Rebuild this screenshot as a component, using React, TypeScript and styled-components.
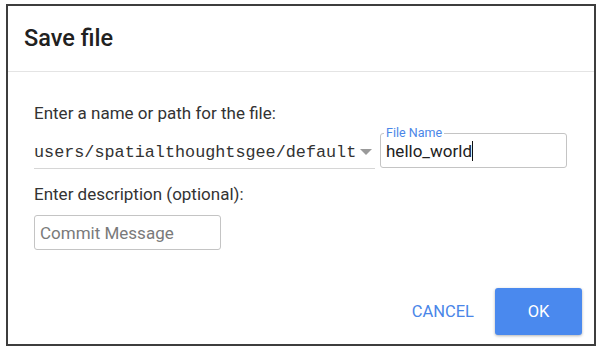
import React from "react";
import styled, { createGlobalStyle } from "styled-components";

const Global = createGlobalStyle`
  html, body { margin: 0; padding: 0; background: #ffffff; }
  body { font-family: Roboto, "Noto Sans", Arial, sans-serif; }
  * { box-sizing: border-box; }
`;

const Dialog = styled.div`
  width: 590px;
  height: 342px;
  margin: 4px 0 0 6px;
  border: 2px solid #3d3d3d;
  background: #fff;
  display: flex;
  flex-direction: column;
`;

const Header = styled.div`
  height: 66px;
  padding-left: 16px;
  display: flex;
  align-items: center;
  border-bottom: 1px solid #e4e4e4;
`;

const Title = styled.h1`
  margin: 0 0 2px 0;
  font-size: 23.5px;
  font-weight: 500;
  color: #212121;
`;

const Body = styled.div`
  padding: 31px 26px 0 26px;
  display: flex;
  flex-direction: column;
`;

const Label = styled.div<{ $mt?: number }>`
  font-size: 17px;
  line-height: 20px;
  color: #333;
  margin-top: ${(p) => p.$mt ?? 0}px;
`;

const Row = styled.div`
  display: flex;
  align-items: flex-end;
  gap: 5px;
  margin-top: 10px;
`;

const PathSelect = styled.div`
  width: 341px;
  height: 35px;
  display: flex;
  align-items: center;
  justify-content: space-between;
  border-bottom: 1px solid #d6d6d6;
  margin-bottom: -1px;
  padding-top: 2px;
`;

const PathText = styled.span`
  font-family: "Liberation Mono", "DejaVu Sans Mono", monospace;
  font-size: 16.8px;
  color: #333;
`;

const Caret = styled.span`
  width: 0;
  height: 0;
  border-left: 6px solid transparent;
  border-right: 6px solid transparent;
  border-top: 6px solid #9a9a9a;
  margin-right: 3px;
`;

const Field = styled.div`
  position: relative;
  width: 187px;
  height: 35px;
  border: 1px solid #c4c4c4;
  border-radius: 3px;
  display: flex;
  align-items: center;
  padding-left: 5px;
`;

const Legend = styled.span`
  position: absolute;
  top: -8px;
  left: 3px;
  padding: 0 2px;
  background: #fff;
  font-size: 12.5px;
  line-height: 14px;
  color: #4a86e8;
`;

const Value = styled.span`
  font-size: 17px;
  color: #222;
`;

const Cursor = styled.span`
  display: inline-block;
  width: 1px;
  height: 20px;
  background: #111;
  vertical-align: -4px;
`;

const Placeholder = styled.span`
  font-size: 17px;
  color: #7a7a7a;
`;

const CommitField = styled(Field)`
  margin-top: 11px;
`;

const Footer = styled.div`
  margin-top: auto;
  display: flex;
  justify-content: flex-end;
  align-items: center;
  padding: 0 12px 9px 0;
  gap: 4px;
`;

const TextButton = styled.button`
  border: none;
  background: none;
  font-family: Roboto, sans-serif;
  font-size: 16.5px;
  color: #4a86e8;
  padding: 0 17px;
  height: 47px;
`;

const PrimaryButton = styled.button`
  border: none;
  width: 87px;
  height: 47px;
  border-radius: 3px;
  background: #4a89ee;
  color: #fff;
  font-family: Roboto, sans-serif;
  font-size: 16.5px;
  box-shadow: 0 1px 3px rgba(0, 0, 0, 0.3);
`;

export default function App() {
  return (
    <>
      <Global />
      <Dialog>
        <Header>
          <Title>Save file</Title>
        </Header>
        <Body>
          <Label>Enter a name or path for the file:</Label>
          <Row>
            <PathSelect>
              <PathText>users/spatialthoughtsgee/default</PathText>
              <Caret />
            </PathSelect>
            <Field>
              <Legend>File Name</Legend>
              <Value>hello_world</Value>
              <Cursor />
            </Field>
          </Row>
          <Label $mt={16}>Enter description (optional):</Label>
          <CommitField>
            <Placeholder>Commit Message</Placeholder>
          </CommitField>
        </Body>
        <Footer>
          <TextButton>CANCEL</TextButton>
          <PrimaryButton>OK</PrimaryButton>
        </Footer>
      </Dialog>
    </>
  );
}
